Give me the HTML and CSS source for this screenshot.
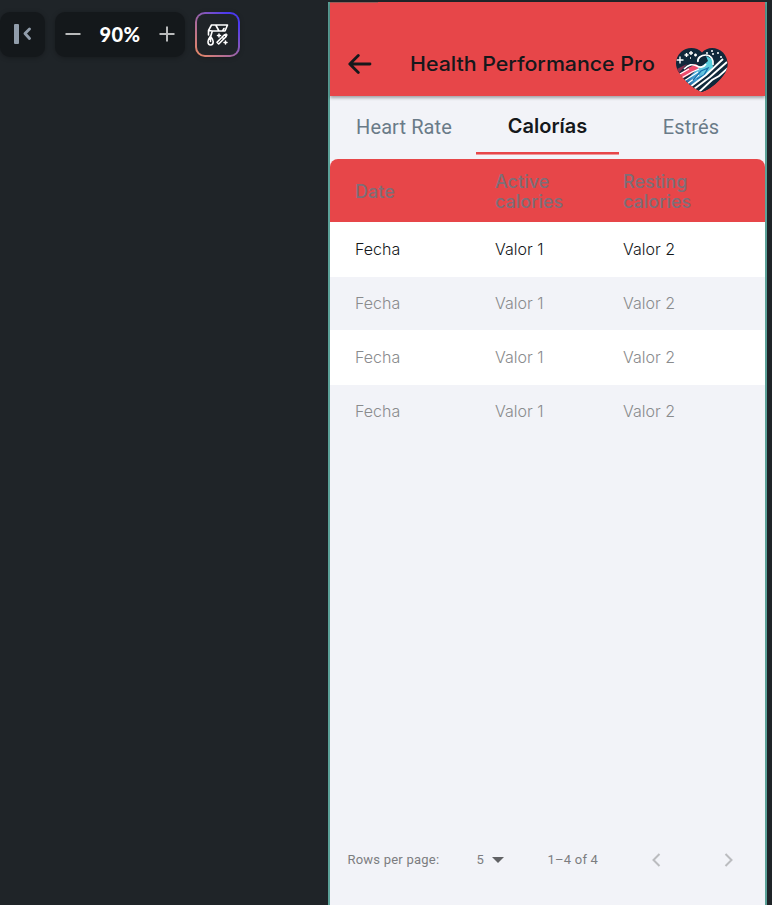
FILE: index.html
```html
<!DOCTYPE html>
<html lang="es">
<head>
<meta charset="utf-8">
<title>Health Performance Pro</title>
<link rel="stylesheet" href="styles.css">
</head>
<body>
<div class="workspace">
  <div class="toolbar">
    <div class="tool collapse">
      <svg width="45" height="45" viewBox="0 0 45 45"><rect x="14" y="12" width="5" height="20" rx="1" fill="#919dab"/><path d="M29.500 17l-4.500 4.500 4.500 5" fill="none" stroke="#919dab" stroke-width="2.900" stroke-linecap="round" stroke-linejoin="round"/></svg>
    </div>
    <div class="tool zoom">
      <svg width="16" height="16" viewBox="0 0 16 16"><path d="M.5 8h15" stroke="#b9babb" stroke-width="2"/></svg>
      <span class="zoom-value">90%</span>
      <svg width="16" height="16" viewBox="0 0 16 16"><path d="M.5 8h15M8 .5v15" stroke="#b9babb" stroke-width="2"/></svg>
    </div>
    <div class="theme">
      <svg width="22" height="22" viewBox="0 0 22 22" fill="none" stroke="#fff" stroke-width="1.600" stroke-linecap="round" stroke-linejoin="round"><path d="M4.500 1H20.500L18 7H5.500L1.500 6.500 4.500 1M9 1.500L12 7M15.500 7l1.500-2.500M1.500 6.500v4.500M5.300 7l-1.300 4.500"/><path d="M3.500 12.200C2 14.200 1 15.700 1 17.800c0 4.200 5.200 4.200 5.200 0 0-2.100-1.200-3.600-2.700-5.600v5.300"/><path d="M10 18.300l7.500-7.500 1.700 1.700-7.500 7.500zM15 13l1.600 1.500"/><path d="M12 10v3M10.500 11.500h3M19 10v2M18 11h2M18.500 17v3M17 18.500h3" stroke-width="1.500"/></svg>
    </div>
  </div>
  <main class="phone">
    <header class="appbar">
      <svg class="back" width="24" height="20" viewBox="0 0 24 20"><path d="M22 10H2M10.300 1.500L1.800 10l8.500 8.500" fill="none" stroke="#15181b" stroke-width="2.800" stroke-linecap="round" stroke-linejoin="round"/></svg>
      <h1><span>Health Performance Pro</span></h1>
      <svg class="logo" width="53" height="45" viewBox="0 0 53 45">
        <defs>
          <clipPath id="heart"><path d="M27 4.500C22-1 12-1.500 6 4c-6 5.500-6.500 14-2 20.500C9 33 18 40 26.500 44 36 41 45 33 50 25c4-7 3-15-2-20.500C42-1.500 32-1.500 27 4.500z"/></clipPath>
          <linearGradient id="wave" x1="1" y1="0" x2="0" y2="1"><stop offset="0" stop-color="#50d4dd"/><stop offset=".45" stop-color="#66c5df"/><stop offset=".7" stop-color="#3d9ad0"/><stop offset="1" stop-color="#1d4b80"/></linearGradient>
        </defs>
        <g clip-path="url(#heart)">
          <path fill="#10283b" d="M0 0h53v45H0z"/>
          <path d="M0 22l12-6-8 9z" fill="#86304f"/>
          <path d="M3 27l10-7 8-4 4 4-11 7-9 5z" fill="#ee4c6e"/>
          <path d="M9 34l13-13 5-3 6-5-2-5 6 3 1 8-8 10-14 9z" fill="url(#wave)"/>
          <path d="M9 21c5-5 8-5 13-3 3 2 7 1 9-2M23 14c-1-4 3-7 8-7 5 0 8 5 7 10" fill="none" stroke="#fff" stroke-width="1.700"/>
          <path d="M25 12c2-5 8-3 7 1-1 3-5 4-7 1" fill="#10283b"/>
          <path d="M3 27l11-6M5 31l12-7 7-3M9 33l14-9M12 36l12-9" fill="none" stroke="#fff" stroke-width="1.200"/>
          <path d="M18 32l8-9 7-3-4 7-7 4" fill="none" stroke="#1770ae" stroke-width="1.300"/>
          <path d="M17 39l15-12L51 10l5 10-27 27z" fill="#10283b"/>
          <path d="M15 39l16-12L48 11M19 41l16-12L52 14M24 44l13-12 7-4 9-8" fill="none" stroke="#fff" stroke-width="1.900"/>
          <path d="M5 8.500v7M1.500 12h7M11.500 5v4M9.500 7h4M16 3v4M14 5h4M20.500 5.500v3M19 7h3" stroke="#fff" stroke-width="1.400"/>
          <path d="M31 5h2M36 3h2M37 6h2M42 5h2M45 9h2M34 8h1M15 10h1" stroke="#fff" stroke-width="1.500"/>
        </g>
      </svg>
    </header>
    <nav class="tabs">
      <span class="tab"><span class="t-heart">Heart Rate</span></span>
      <span class="tab active"><span class="t-cal">Calorías</span></span>
      <span class="tab"><span class="t-stress">Estrés</span></span>
    </nav>
    <section class="table">
      <div class="row head"><span>Date</span><span>Active<br>calories</span><span>Resting<br>calories</span></div>
      <div class="row first"><span>Fecha</span><span>Valor 1</span><span>Valor 2</span></div>
      <div class="row alt"><span>Fecha</span><span>Valor 1</span><span>Valor 2</span></div>
      <div class="row third"><span>Fecha</span><span>Valor 1</span><span>Valor 2</span></div>
      <div class="row alt"><span>Fecha</span><span>Valor 1</span><span>Valor 2</span></div>
    </section>
    <footer class="pager">
      <span class="label">Rows per page:</span>
      <span class="size">5</span>
      <svg class="caret" width="12" height="6" viewBox="0 0 12 6"><path d="M0 0h12L6 6z" fill="#616265"/></svg>
      <span class="range">1–4 of 4</span>
      <svg class="prev" width="9" height="14" viewBox="0 0 9 14"><path d="M7.500 1L1.500 7l6 6" fill="none" stroke="#bbbcbf" stroke-width="2"/></svg>
      <svg class="next" width="9" height="14" viewBox="0 0 9 14"><path d="M1.500 1l6 6-6 6" fill="none" stroke="#bbbcbf" stroke-width="2"/></svg>
    </footer>
  </main>
</div>
</body>
</html>
```
FILE: styles.css
```css
* { box-sizing: border-box; }
body { margin: 0; background: #1f2428; font-family: Inter, sans-serif; overflow: hidden; }
svg { display: block; flex: none; }
.workspace { display: flex; height: 905px; }
.toolbar { width: 328px; padding-top: 12px; display: flex; gap: 10px; flex: none; }
.tool { height: 45px; background: #14181b; border-radius: 10px; box-shadow: 0 1px 5px #0004; }
.collapse { width: 45px; }
.zoom { width: 130px; display: flex; align-items: center; justify-content: space-between; padding: 0 10px 1px; }
.zoom-value { color: #fff; font: 900 20px/24px Lato, sans-serif; letter-spacing: .5px; }
.theme { width: 45px; height: 45px; border: 2px solid transparent; border-radius: 10px; display: grid; place-items: center; background: linear-gradient(#1f2428, #1f2428) padding-box, linear-gradient(45deg, #ed8b60, #9861aa 50%, #4b39ef 85%) border-box; box-shadow: 0 1px 5px #0003; }
.phone { width: 439px; height: 903px; margin-top: 2px; flex: none; display: flex; flex-direction: column; background: #f2f3f8; border: solid #5ba198; border-width: 0 2px; }
.appbar { height: 94px; flex: none; background: #e74649; padding: 28px 37px 0 18px; display: flex; align-items: center; box-shadow: 0 2px 3px #0005; z-index: 1; border-top: 1px solid #e74649; border-image: linear-gradient(90deg, #985c58 49px, #e74649 49px) 1; border-width: 1px 0 0; }
.back { margin-top: 1px; }
h1 { width: 245px; margin: 1px 0 0 37.500px; font-size: 20px; line-height: 26px; font-weight: 500; color: #15181b; white-space: nowrap; }
h1 span { display: inline-block; transform: scaleX(1.067); transform-origin: left; }
.logo { margin: 14px 0 0 22px; }
.tabs { height: 63px; flex: none; display: grid; grid-template-columns: 146px 143px 146px; font: 400 20px/24px Roboto, sans-serif; color: #6a7b88; }
.tab { display: flex; justify-content: center; padding-top: 19px; height: 58px; }
.t-heart { padding-left: 2px; letter-spacing: .1px; }
.t-stress { padding-right: 2px; letter-spacing: .1px; }
.active { border-bottom: 2px solid #e74649; box-shadow: 0 1px #ef9699; font: 600 20px/24px Inter, sans-serif; color: #15181b; padding-top: 18px; }
.row { height: 54px; display: grid; grid-template-columns: 140px 128px 142px; align-items: center; padding: 0 0 2px 25px; font-size: 16px; line-height: 20px; font-weight: 300; color: #8a8b8d; background: #fff; }
.head { height: 63px; background: #e74649; color: #7e6e78; font-size: 18px; font-weight: 500; letter-spacing: 0; border-radius: 8px 8px 0 0; padding-top: 2px; padding-bottom: 0; }
.first { height: 55px; color: #15181b; }
.alt { height: 53px; background: #f2f3f8; }
.third { height: 55px; }
.pager { margin-top: auto; height: 91px; display: flex; align-items: center; padding-left: 17.500px; font: 400 13px/20px Roboto, sans-serif; letter-spacing: .22px; color: #7c7d80; }
.label { width: 129px; }
.size { width: 15.500px; }
.range { width: 104.500px; margin-left: 43.500px; }
.next { margin-left: 63px; }
```
